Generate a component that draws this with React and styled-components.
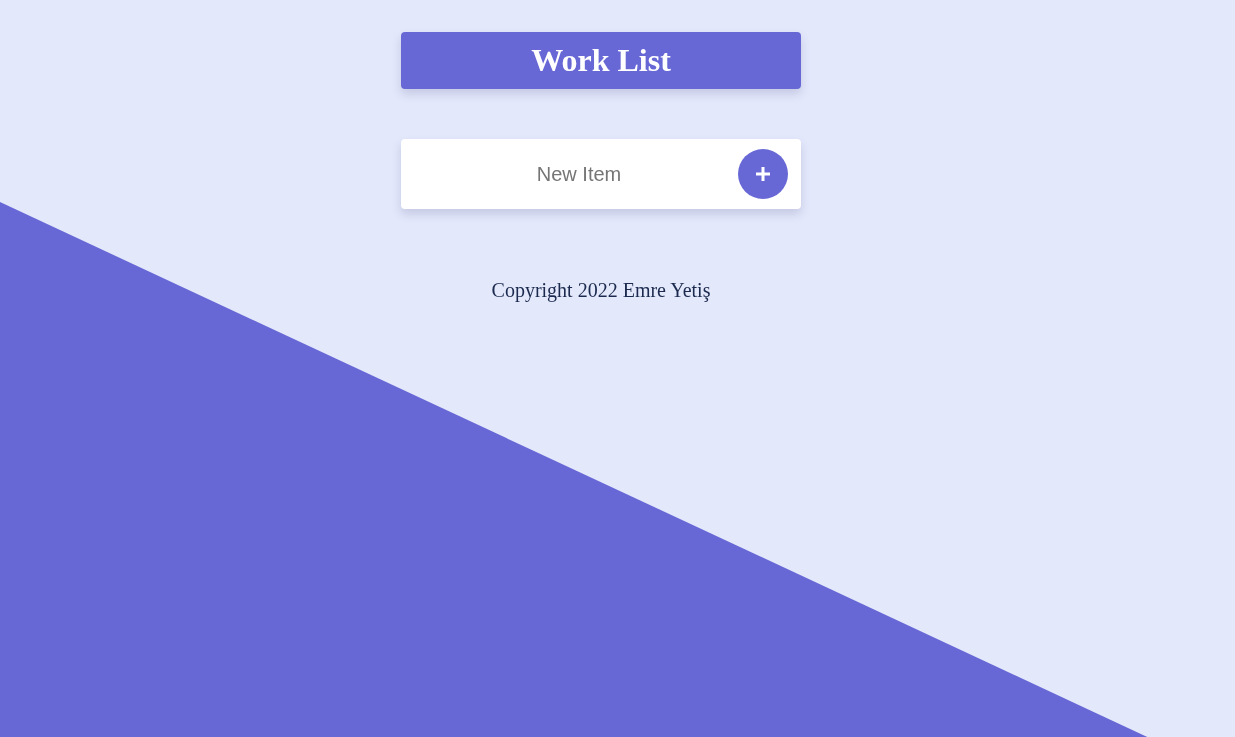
import React from 'react'
import styled, { createGlobalStyle } from 'styled-components'

const GlobalStyle = createGlobalStyle`
  html, body {
    margin: 0;
    min-height: 100%;
  }
  body {
    background-color: #e3e8fb;
    font-family: "Liberation Serif", "Times New Roman", serif;
    overflow: hidden;
  }
  body::before {
    content: '';
    position: fixed;
    inset: 0;
    z-index: -1;
    background-color: #6768d5;
    clip-path: polygon(0 27.4%, 92.9% 100%, 0 100%);
  }
`

const Page = styled.div`
  width: 1202px;
  display: flex;
  justify-content: center;
`

const Container = styled.div`
  width: 400px;
  margin-top: 32px;
  display: flex;
  flex-direction: column;
  align-items: stretch;
`

const Heading = styled.div`
  height: 57px;
  display: flex;
  align-items: center;
  justify-content: center;
  background-color: #6768d5;
  border-radius: 4px;
  box-shadow: 0 5px 10px rgba(60, 60, 120, 0.18);
  & h1 {
    margin: 0;
    color: #ffffff;
    font-size: 32px;
    font-weight: 700;
  }
`

const Form = styled.form`
  margin-top: 50px;
  height: 70px;
  box-sizing: border-box;
  display: flex;
  align-items: center;
  padding: 0 13px 0 19px;
  background-color: #ffffff;
  border-radius: 4px;
  box-shadow: 0 5px 10px rgba(60, 60, 120, 0.18);
`

const Input = styled.input`
  flex: 1;
  min-width: 0;
  border: none;
  outline: none;
  background: transparent;
  text-align: center;
  font-family: "Liberation Sans", Arial, sans-serif;
  font-size: 20px;
  color: #333333;
  &::placeholder {
    color: #757575;
  }
`

const AddButton = styled.button`
  width: 50px;
  height: 50px;
  flex-shrink: 0;
  border: none;
  border-radius: 50%;
  background-color: #6768d5;
  display: flex;
  align-items: center;
  justify-content: center;
  cursor: pointer;
  padding: 0;
`

const Footer = styled.p`
  margin: 70px 0 0;
  text-align: center;
  font-size: 20px;
  color: #1b2a4e;
`

function App() {
  return (
    <Page>
      <GlobalStyle />
      <Container>
        <Heading>
          <h1>Work List</h1>
        </Heading>
        <Form onSubmit={e => e.preventDefault()}>
          <Input type="text" placeholder="New Item" />
          <AddButton type="submit">
            <svg width="18" height="18" viewBox="0 0 18 18">
              <path d="M9 2v14M2 9h14" stroke="#fff" strokeWidth="3" />
            </svg>
          </AddButton>
        </Form>
        <Footer>Copyright 2022 Emre Yetiş</Footer>
      </Container>
    </Page>
  )
}

export default App
